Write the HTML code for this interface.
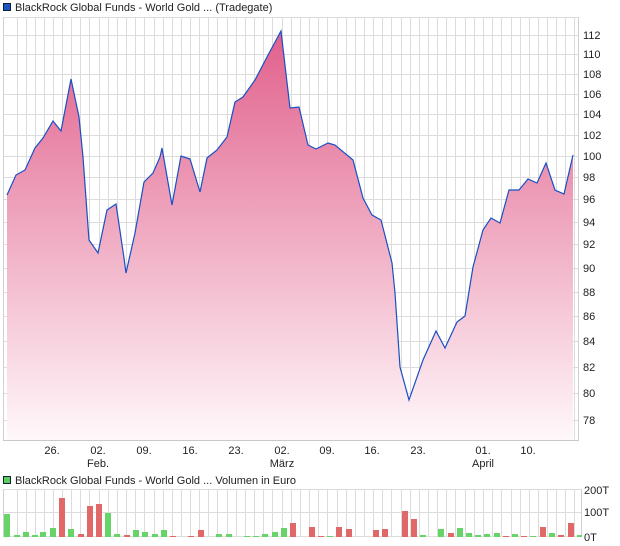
<!DOCTYPE html>
<html><head><meta charset="utf-8"><style>
html,body{margin:0;padding:0;background:#fff;}
svg{display:block;font-family:"Liberation Sans",sans-serif;}
</style></head><body>
<svg width="620" height="546" viewBox="0 0 620 546" xmlns="http://www.w3.org/2000/svg">
<defs>
<linearGradient id="g" x1="0" y1="17" x2="0" y2="440" gradientUnits="userSpaceOnUse">
<stop offset="0" stop-color="#e05a88"/>
<stop offset="1" stop-color="#fff8fa"/>
</linearGradient>
</defs>
<!-- legend -->
<rect x="3.5" y="3.5" width="7" height="7" fill="#1a55c0" stroke="#123" stroke-width="1"/>
<text x="15" y="11" font-size="11" fill="#222">BlackRock Global Funds - World Gold ... (Tradegate)</text>
<!-- grid -->
<g stroke="#dcdcdc" stroke-width="1" fill="none">
<path d="M17.5 17V440M26.5 17V440M35.5 17V440M44.5 17V440M53.5 17V440M62.5 17V440M71.5 17V440M80.5 17V440M89.5 17V440M99.5 17V440M108.5 17V440M117.5 17V440M126.5 17V440M135.5 17V440M144.5 17V440M154.5 17V440M163.5 17V440M172.5 17V440M181.5 17V440M190.5 17V440M199.5 17V440M208.5 17V440M217.5 17V440M227.5 17V440M236.5 17V440M245.5 17V440M254.5 17V440M263.5 17V440M272.5 17V440M282.5 17V440M291.5 17V440M300.5 17V440M309.5 17V440M318.5 17V440M327.5 17V440M337.5 17V440M346.5 17V440M355.5 17V440M364.5 17V440M373.5 17V440M382.5 17V440M391.5 17V440M401.5 17V440M410.5 17V440M419.5 17V440M428.5 17V440M437.5 17V440M446.5 17V440M455.5 17V440M465.5 17V440M474.5 17V440M483.5 17V440M492.5 17V440M501.5 17V440M511.5 17V440M520.5 17V440M529.5 17V440M538.5 17V440M547.5 17V440M556.5 17V440M565.5 17V440M574.5 17V440"/>
<path d="M3 17.5H578M3 35.5H578M3 54.5H578M3 74.5H578M3 94.5H578M3 114.5H578M3 135.5H578M3 156.5H578M3 177.5H578M3 199.5H578M3 222.5H578M3 244.5H578M3 268.5H578M3 292.5H578M3 316.5H578M3 341.5H578M3 367.5H578M3 393.5H578M3 420.5H578"/>
<path d="M3.5 17V441M578.5 17V441" stroke="#d0d0d0"/>
</g>
<!-- area -->
<path fill="url(#g)" d="M7 195L16 175L25 170L35 148L43 138L53 121L61 131L71 79L79 117L83 157L89 240L98 253L107 210L116 204L124 258L126 273L135 233L144 182L153 173L160 157L162 148L172 205L181 156L190 159L200 192L207 158L217 150L227 137L235 102L243 97L255 80L267 57L281 31L290 108L299 107L308 145L316 149L328 143L335 145L353 160L363 198L372 215L381 220L392 263L395 293L400 367L409 400L423 360L436 331L445 348L457 322L465 316L473 267L483 230L491 218L500 223L509 190L519 190L528 179L537 183L546 163L555 190L564 194L573 155L573 440L7 440Z"/>
<polyline fill="none" stroke="#1a4fc4" stroke-width="1.2" points="7,195 16,175 25,170 35,148 43,138 53,121 61,131 71,79 79,117 83,157 89,240 98,253 107,210 116,204 124,258 126,273 135,233 144,182 153,173 160,157 162,148 172,205 181,156 190,159 200,192 207,158 217,150 227,137 235,102 243,97 255,80 267,57 281,31 290,108 299,107 308,145 316,149 328,143 335,145 353,160 363,198 372,215 381,220 392,263 395,293 400,367 409,400 423,360 436,331 445,348 457,322 465,316 473,267 483,230 491,218 500,223 509,190 519,190 528,179 537,183 546,163 555,190 564,194 573,155"/>
<!-- x axis -->
<path d="M3 440.5H579" stroke="#c8c8c8"/>
<g font-size="11" fill="#222" text-anchor="middle">
<text x="52" y="454">26.</text><text x="98" y="454">02.</text><text x="144" y="454">09.</text><text x="190" y="454">16.</text><text x="236" y="454">23.</text><text x="282" y="454">02.</text><text x="327" y="454">09.</text><text x="372" y="454">16.</text><text x="418" y="454">23.</text><text x="483" y="454">01.</text><text x="528" y="454">10.</text>
<text x="98" y="467">Feb.</text><text x="282" y="467">März</text><text x="483" y="467">April</text>
</g>
<!-- y labels -->
<g font-size="11" fill="#222">
<text x="583" y="39">112</text><text x="583" y="58">110</text><text x="583" y="78">108</text><text x="583" y="98">106</text><text x="583" y="118">104</text><text x="583" y="139">102</text><text x="583" y="160">100</text><text x="583" y="181">98</text><text x="583" y="203">96</text><text x="583" y="226">94</text><text x="583" y="248">92</text><text x="583" y="272">90</text><text x="583" y="296">88</text><text x="583" y="320">86</text><text x="583" y="345">84</text><text x="583" y="371">82</text><text x="583" y="397">80</text><text x="583" y="424">78</text>
</g>
<!-- volume legend -->
<rect x="3.5" y="476.5" width="7" height="7" fill="#5ccc5c" stroke="#123" stroke-width="1"/>
<text x="15" y="484" font-size="11" fill="#222">BlackRock Global Funds - World Gold ... Volumen in Euro</text>
<!-- volume grid -->
<g stroke="#dcdcdc" stroke-width="1" fill="none">
<path d="M17.5 489V537M26.5 489V537M35.5 489V537M44.5 489V537M53.5 489V537M62.5 489V537M71.5 489V537M80.5 489V537M89.5 489V537M99.5 489V537M108.5 489V537M117.5 489V537M126.5 489V537M135.5 489V537M144.5 489V537M154.5 489V537M163.5 489V537M172.5 489V537M181.5 489V537M190.5 489V537M199.5 489V537M208.5 489V537M217.5 489V537M227.5 489V537M236.5 489V537M245.5 489V537M254.5 489V537M263.5 489V537M272.5 489V537M282.5 489V537M291.5 489V537M300.5 489V537M309.5 489V537M318.5 489V537M327.5 489V537M337.5 489V537M346.5 489V537M355.5 489V537M364.5 489V537M373.5 489V537M382.5 489V537M391.5 489V537M401.5 489V537M410.5 489V537M419.5 489V537M428.5 489V537M437.5 489V537M446.5 489V537M455.5 489V537M465.5 489V537M474.5 489V537M483.5 489V537M492.5 489V537M501.5 489V537M511.5 489V537M520.5 489V537M529.5 489V537M538.5 489V537M547.5 489V537M556.5 489V537M565.5 489V537M574.5 489V537"/>
<path d="M3 489.5H581M3 512.5H581M3 536.5H581"/>
<path d="M3.5 489V537M581.5 489V537" stroke="#d0d0d0"/>
</g>
<g fill="#66d466">
<rect x="4" y="514" width="6" height="23"/><rect x="14" y="535" width="6" height="2"/><rect x="23" y="532" width="6" height="5"/><rect x="32" y="535" width="6" height="2"/><rect x="40" y="532" width="6" height="5"/><rect x="50" y="528" width="6" height="9"/><rect x="68" y="529" width="6" height="8"/><rect x="105" y="513" width="6" height="24"/><rect x="114" y="534" width="6" height="3"/><rect x="133" y="530" width="6" height="7"/><rect x="142" y="532" width="6" height="5"/><rect x="152" y="534" width="6" height="3"/><rect x="161" y="530" width="6" height="7"/><rect x="216" y="534" width="6" height="3"/><rect x="226" y="534" width="6" height="3"/><rect x="244" y="536" width="6" height="1"/><rect x="253" y="536" width="6" height="1"/><rect x="262" y="534" width="6" height="3"/><rect x="272" y="532" width="6" height="5"/><rect x="281" y="528" width="6" height="9"/><rect x="327" y="536" width="6" height="1"/><rect x="420" y="535" width="6" height="2"/><rect x="438" y="529" width="6" height="8"/><rect x="457" y="528" width="6" height="9"/><rect x="466" y="533" width="6" height="4"/><rect x="475" y="535" width="6" height="2"/><rect x="484" y="534" width="6" height="3"/><rect x="494" y="533" width="6" height="4"/><rect x="512" y="534" width="6" height="3"/><rect x="530" y="536" width="6" height="1"/><rect x="549" y="533" width="6" height="4"/><rect x="577" y="535" width="5" height="2"/>
</g>
<g fill="#e06868">
<rect x="59" y="498" width="6" height="39"/><rect x="78" y="534" width="6" height="3"/><rect x="87" y="506" width="6" height="31"/><rect x="96" y="504" width="6" height="33"/><rect x="124" y="535" width="6" height="2"/><rect x="170" y="536" width="6" height="1"/><rect x="188" y="536" width="6" height="1"/><rect x="198" y="530" width="6" height="7"/><rect x="290" y="523" width="6" height="14"/><rect x="309" y="527" width="6" height="10"/><rect x="318" y="536" width="6" height="1"/><rect x="336" y="527" width="6" height="10"/><rect x="346" y="529" width="6" height="8"/><rect x="373" y="530" width="6" height="7"/><rect x="382" y="529" width="6" height="8"/><rect x="402" y="511" width="6" height="26"/><rect x="411" y="519" width="6" height="18"/><rect x="448" y="533" width="6" height="4"/><rect x="503" y="536" width="6" height="1"/><rect x="521" y="536" width="6" height="1"/><rect x="540" y="527" width="6" height="10"/><rect x="558" y="535" width="6" height="2"/><rect x="568" y="523" width="6" height="14"/>
</g>
<g font-size="11" fill="#222">
<text x="584" y="494">200T</text><text x="584" y="516">100T</text><text x="584" y="541">0T</text>
</g>
</svg>
</body></html>
